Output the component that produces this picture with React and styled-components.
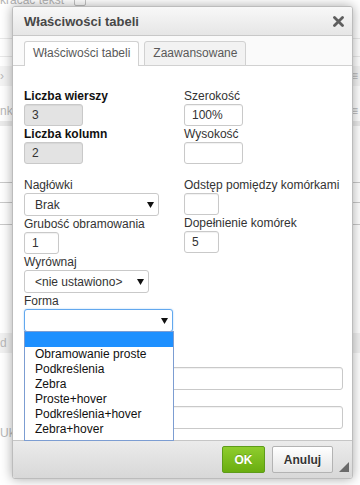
import React from "react";
import styled, { createGlobalStyle } from "styled-components";

const GlobalStyle = createGlobalStyle`
  html, body { margin: 0; padding: 0; }
  body {
    font-family: "Liberation Sans", Arial, sans-serif;
    background: #fff;
  }
`;

function Arrow() {
  return (
    <svg width="7" height="6" viewBox="0 0 7 6">
      <polygon points="0,0 7,0 3.5,6" fill="#111" />
    </svg>
  );
}

function CloseIcon() {
  return (
    <svg width="11" height="11" viewBox="0 0 11 11">
      <path d="M1.5 1.5 L9.5 9.5 M9.5 1.5 L1.5 9.5" stroke="#5e5e5e" strokeWidth="2.8" strokeLinecap="round" />
    </svg>
  );
}

const formOptions = [
  "",
  "Obramowanie proste",
  "Podkreślenia",
  "Zebra",
  "Proste+hover",
  "Podkreślenia+hover",
  "Zebra+hover",
];

export default function App() {
  return (
    <>
      <GlobalStyle />
      <Page>
        <Backdrop>
          <BgRow h={7}>
            <TopText>kracać tekst</TopText>
            <FakeCheck />
          </BgRow>
          <BgRow h={32} line="#e9e9e9" />
          <BgRow h={18} line="#e9e9e9" />
          <BgRow h={9} />
          <BgRow h={20} bg="#f4f4f4">
            <BgText>›</BgText>
            <BgText>≡</BgText>
          </BgRow>
          <BgRow h={14} />
          <BgRow h={21}>
            <BgText>nk</BgText>
            <BgText>≡</BgText>
          </BgRow>
          <BgRow h={5} bg="#ebebeb" />
          <BgRow h={57} line="#c9c9c9" />
          <BgRow h={20} line="#c9c9c9" />
          <BgRow h={22} line="#c9c9c9" />
          <BgRow h={108} />
          <BgRow h={20} bg="#f1f1f1">
            <BgText>d</BgText>
          </BgRow>
          <BgRow h={72} />
          <BgRow h={15}>
            <BgText>Uk</BgText>
          </BgRow>
        </Backdrop>

        <Dialog>
          <Header>
            <Title>Właściwości tabeli</Title>
            <CloseIcon />
          </Header>

          <TabBar>
            <Tab active>Właściwości tabeli</Tab>
            <Tab>Zaawansowane</Tab>
          </TabBar>

          <Body>
            <Section>
              <Column>
                <Label bold>Liczba wierszy</Label>
                <TextInput w={59} disabled defaultValue="3" />
                <Label bold>Liczba kolumn</Label>
                <TextInput w={59} disabled defaultValue="2" />
              </Column>
              <Column>
                <Label>Szerokość</Label>
                <TextInput w={59} defaultValue="100%" />
                <Label>Wysokość</Label>
                <TextInput w={59} defaultValue="" />
              </Column>
            </Section>

            <Section gap={13}>
              <Column>
                <Label>Nagłówki</Label>
                <SelectBox w={135}>
                  <span>Brak</span>
                  <Arrow />
                </SelectBox>
                <Label>Grubość obramowania</Label>
                <TextInput w={35} defaultValue="1" />
                <Label>Wyrównaj</Label>
                <SelectBox w={125}>
                  <span>&lt;nie ustawiono&gt;</span>
                  <Arrow />
                </SelectBox>
                <Label>Forma</Label>
                <SelectBox w={149} focused>
                  <span></span>
                  <Arrow />
                  <DropList>
                    {formOptions.map((o, i) => (
                      <DropItem key={i} selected={i === 0}>{o}</DropItem>
                    ))}
                  </DropList>
                </SelectBox>
              </Column>
              <Column>
                <Label>Odstęp pomiędzy komórkami</Label>
                <TextInput w={35} defaultValue="" />
                <Label>Dopełnienie komórek</Label>
                <TextInput w={35} defaultValue="5" />
              </Column>
            </Section>

            <Section gap={19} wide>
              <Column>
                <LabelGap />
                <TextInput w={319} h={23} defaultValue="" />
                <LabelGap />
                <TextInput w={319} h={23} defaultValue="" />
              </Column>
            </Section>
          </Body>

          <Footer>
            <Button primary>OK</Button>
            <Button>Anuluj</Button>
            <Grip>
              <svg width="10" height="10" viewBox="0 0 10 10">
                <polygon points="10,0 10,10 0,10" fill="#6a6a6a" />
              </svg>
            </Grip>
          </Footer>
        </Dialog>
      </Page>
    </>
  );
}

const Page = styled.div`
  position: relative;
  width: 360px;
  height: 485px;
  overflow: hidden;
  background: #fff;
`;

const Backdrop = styled.div`
  display: flex;
  flex-direction: column;
  height: 100%;
  color: #b9b9b9;
  font-size: 12px;
`;

const BgRow = styled.div`
  flex: none;
  height: ${(p) => p.h}px;
  box-sizing: border-box;
  display: flex;
  align-items: center;
  justify-content: space-between;
  padding-right: 2px;
  overflow: hidden;
  background: ${(p) => p.bg || "transparent"};
  border-bottom: ${(p) => (p.line ? `1px solid ${p.line}` : "none")};
`;

const TopText = styled.span`
  margin-top: -8px;
  font-size: 12px;
  color: #b5b5b5;
`;

const FakeCheck = styled.span`
  width: 10px;
  height: 10px;
  margin: -8px auto 0 10px;
  border: 1px solid #c4c4c4;
  border-radius: 2px;
`;

const BgText = styled.span`
  color: #b9b9b9;
  font-size: 12px;
`;

const Dialog = styled.div`
  position: absolute;
  left: 12px;
  top: 6px;
  width: 341px;
  height: 473px;
  box-sizing: border-box;
  border: 1px solid #bcbcbc;
  border-radius: 3px;
  background: #fff;
  box-shadow: 0 0 12px rgba(0, 0, 0, 0.35);
  display: flex;
  flex-direction: column;
`;

const Header = styled.div`
  flex: none;
  height: 29px;
  box-sizing: border-box;
  padding: 0 8px 0 11px;
  display: flex;
  align-items: center;
  justify-content: space-between;
  background: linear-gradient(#f8f8f8, #e6e6e6);
  border-bottom: 1px solid #c8c8c8;
  border-radius: 2px 2px 0 0;
`;

const Title = styled.div`
  font-size: 13px;
  font-weight: bold;
  color: #474747;
`;

const TabBar = styled.div`
  flex: none;
  height: 30px;
  box-sizing: border-box;
  padding: 6px 0 0 11px;
  display: flex;
  align-items: flex-end;
  gap: 5px;
  background: #fafafa;
  border-bottom: 1px solid #d1d1d1;
`;

const Tab = styled.div`
  height: 25px;
  margin-bottom: -1px;
  box-sizing: border-box;
  padding: 0 8px;
  line-height: 23px;
  font-size: 12px;
  color: #595959;
  border: 1px solid #d1d1d1;
  border-bottom: ${(p) => (p.active ? "none" : "1px solid #d1d1d1")};
  border-radius: 3px 3px 0 0;
  background: ${(p) => (p.active ? "#fff" : "#f2f2f2")};
`;

const Body = styled.div`
  flex: 1;
  padding: 22px 0 0 11px;
`;

const Section = styled.div`
  display: grid;
  grid-template-columns: ${(p) => (p.wide ? "1fr" : "160px 1fr")};
  margin-top: ${(p) => p.gap || 0}px;
`;

const Column = styled.div`
  display: flex;
  flex-direction: column;
  align-items: flex-start;
`;

const Label = styled.div`
  height: 16px;
  line-height: 16px;
  font-size: 12px;
  white-space: nowrap;
  font-weight: ${(p) => (p.bold ? "bold" : "normal")};
  color: ${(p) => (p.bold ? "#111" : "#333")};
`;

const LabelGap = styled.div`
  height: 16px;
`;

const TextInput = styled.input`
  box-sizing: border-box;
  width: ${(p) => p.w}px;
  height: ${(p) => p.h || 22}px;
  margin: 0;
  padding: 0 7px;
  border: 1px solid #c9c9c9;
  border-radius: 3px;
  background: #fff;
  box-shadow: inset 0 1px 1px rgba(0, 0, 0, 0.06);
  font-family: "Liberation Sans", Arial, sans-serif;
  font-size: 12px;
  color: #333;
  outline: none;

  &:disabled {
    background: #e3e3e3;
    color: #333;
  }
`;

const SelectBox = styled.div`
  position: relative;
  box-sizing: border-box;
  width: ${(p) => p.w}px;
  height: 23px;
  padding: 0 4px 0 10px;
  display: flex;
  align-items: center;
  justify-content: space-between;
  border: 1px solid ${(p) => (p.focused ? "#62a8ee" : "#c9c9c9")};
  border-radius: 3px;
  box-shadow: ${(p) => (p.focused ? "0 0 2px #a9d0f7" : "none")};
  background: #fff;
  font-size: 12px;
  color: #333;
  white-space: nowrap;
`;

const DropList = styled.ul`
  position: absolute;
  top: 100%;
  left: -1px;
  width: 150px;
  box-sizing: border-box;
  margin: 0;
  padding: 0 0 3px;
  list-style: none;
  background: #fff;
  border: 1px solid #7c9dd2;
  z-index: 2;
`;

const DropItem = styled.li`
  height: 15px;
  line-height: 15px;
  padding-left: 10px;
  font-size: 12px;
  color: #111;
  background: ${(p) => (p.selected ? "#1e90ff" : "transparent")};
`;

const Footer = styled.div`
  position: relative;
  flex: none;
  height: 38px;
  box-sizing: border-box;
  padding-right: 19px;
  display: flex;
  align-items: center;
  justify-content: flex-end;
  gap: 7px;
  background: linear-gradient(#ebebeb, #d8d8d8);
  border-top: 1px solid #c6c6c6;
  border-radius: 0 0 2px 2px;
`;

const Button = styled.div`
  box-sizing: border-box;
  height: 27px;
  width: ${(p) => (p.primary ? 43 : 61)}px;
  display: flex;
  align-items: center;
  justify-content: center;
  font-size: 12px;
  font-weight: bold;
  border-radius: 2px;
  border: 1px solid ${(p) => (p.primary ? "#5e9c1a" : "#b3b3b3")};
  color: ${(p) => (p.primary ? "#fff" : "#333")};
  background: ${(p) =>
    p.primary
      ? "linear-gradient(#8fcd2e, #69ad10)"
      : "linear-gradient(#ffffff, #e4e4e4)"};
  text-shadow: ${(p) => (p.primary ? "0 -1px 0 rgba(0,0,0,0.2)" : "0 1px 0 #fff")};
`;

const Grip = styled.div`
  position: absolute;
  right: 3px;
  bottom: 6px;
  line-height: 0;
`;
